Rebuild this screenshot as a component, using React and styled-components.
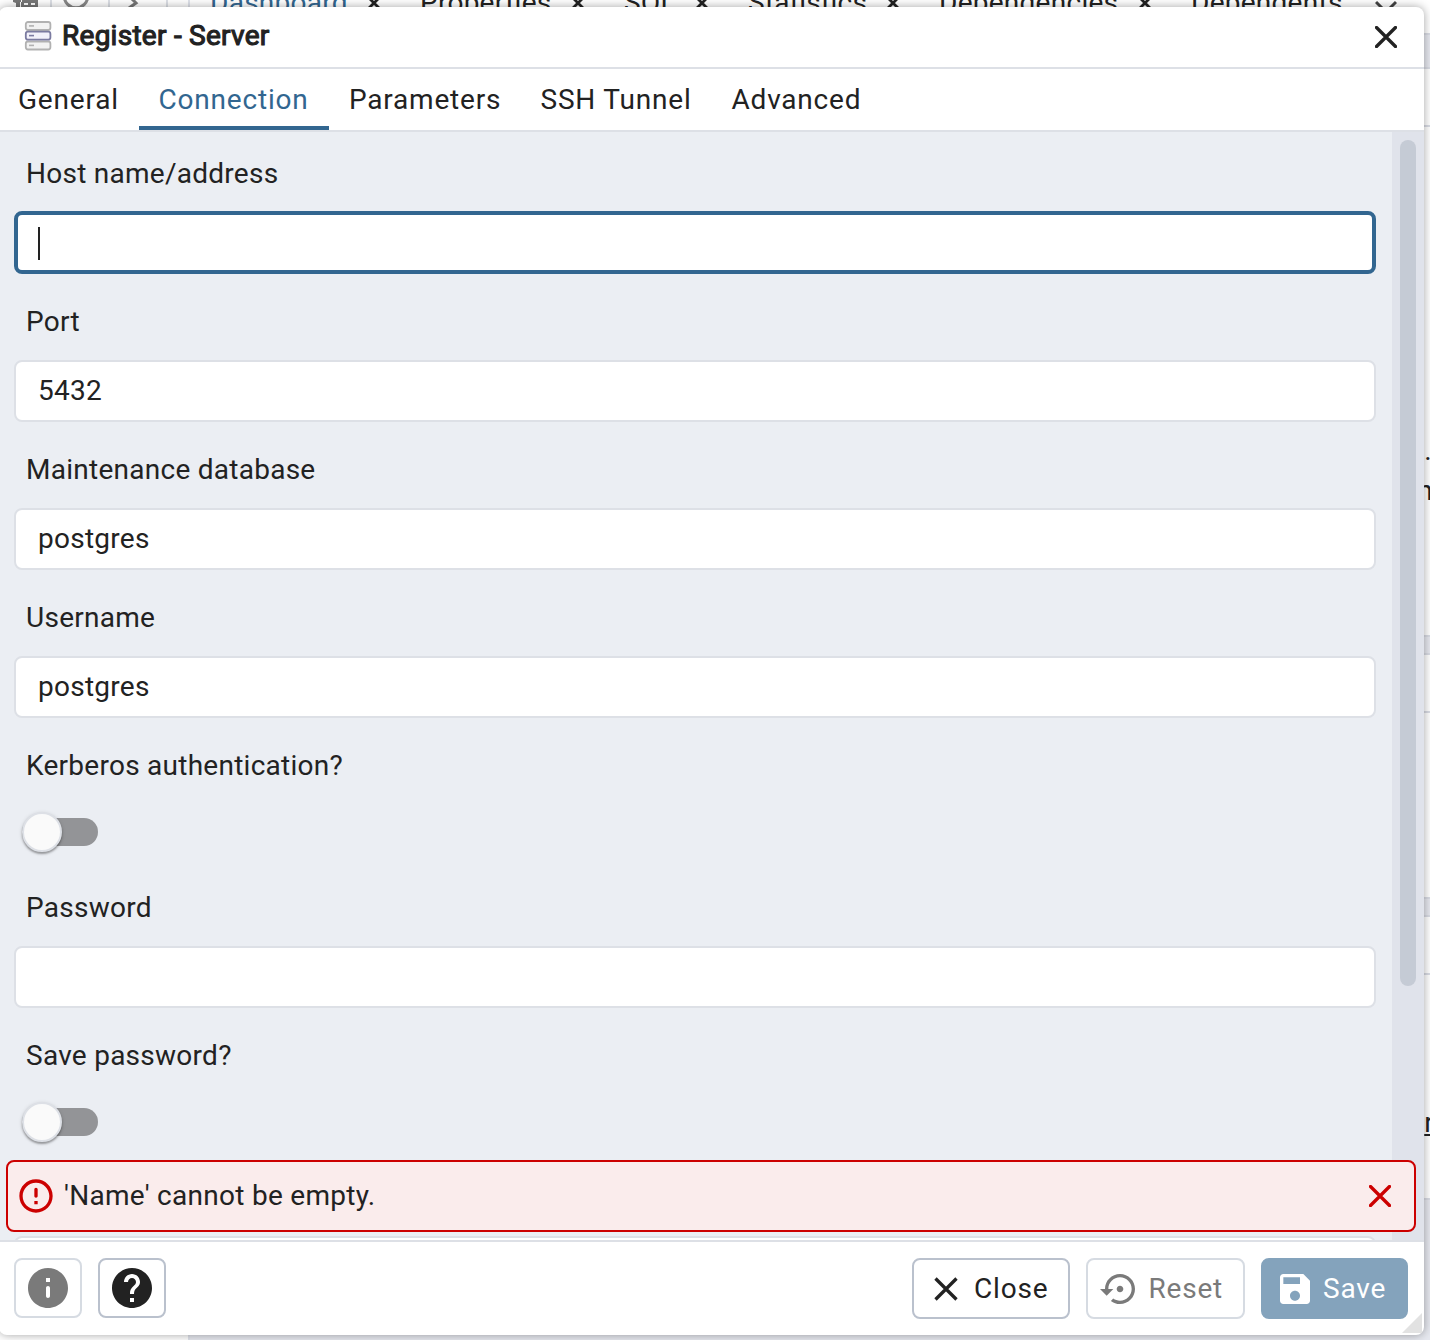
import React from "react";
import styled, { createGlobalStyle, css } from "styled-components";

const Global = createGlobalStyle`
  * { box-sizing: border-box; }
  body { margin: 0; overflow: hidden; background: #fff; }
  body, button, input { font-family: Roboto, "Liberation Sans", sans-serif; color: #222; font-size: 28px; }
`;

const Screen = styled.div`
  position: relative;
  width: 1430px;
  height: 1340px;
  overflow: hidden;
  display: flex;
  flex-direction: column;
  background: #fff;
`;

const Backdrop = styled.div`
  flex: 1;
  display: grid;
  grid-template-columns: 190px 1fr;
`;

const BrowserPanel = styled.div`
  background: #fff;
  border-right: 2px solid #e0e3eb;
`;

const MiniTools = styled.div`
  display: flex;
  height: 34px;
  align-items: flex-start;
`;

const MiniTool = styled.div`
  width: ${(p) => p.$w}px;
  height: 34px;
  border-right: 2px solid #dde0e6;
  display: flex;
  padding-left: ${(p) => p.$pad || 0}px;
  svg { display: block; flex: none; }
`;

const MainPanel = styled.div`
  display: flex;
  flex-direction: column;
  background: #e6e8ef;
`;

const BackTabs = styled.div`
  position: relative;
  height: 35px;
  background: #fff;
  border-bottom: 2px solid #d9dce4;
`;

const BackTab = styled.span`
  position: absolute;
  left: ${(p) => p.$x - 190}px;
  top: -14px;
  line-height: 34px;
  letter-spacing: 0.2626px;
  white-space: nowrap;
  color: ${(p) => (p.$active ? "#326690" : "#222")};
`;

const BackTabX = styled.svg`
  position: absolute;
  left: ${(p) => p.$x - 190}px;
  top: -3px;
`;

const StripCard = styled.div`
  height: ${(p) => p.$h}px;
  margin-top: ${(p) => p.$gap}px;
  background: #fff;
  border-top: 2px solid #d9dce4;
  border-bottom: 2px solid #d9dce4;
  position: relative;
`;

const StripRule = styled.div`
  height: ${(p) => p.$at}px;
  border-bottom: 2px solid #d9dce4;
`;

const Stray = styled.span`
  position: absolute;
  right: ${(p) => p.$right}px;
  top: ${(p) => p.$top}px;
  line-height: 34px;
  letter-spacing: 0.2626px;
  text-decoration: ${(p) => (p.$link ? "underline" : "none")};
`;

const Dialog = styled.section`
  position: absolute;
  left: -1px;
  top: 7px;
  width: 1425px;
  height: 1328px;
  padding-left: 1px;
  display: flex;
  flex-direction: column;
  background: #fff;
  border-radius: 8px;
  box-shadow: 0 0 10px rgba(0, 0, 0, 0.36);
`;

const Header = styled.header`
  flex: none;
  height: 62px;
  padding: 0 27px 0 24px;
  display: flex;
  align-items: center;
  border-bottom: 2px solid #dde0e6;
  > svg:first-child { margin-bottom: 2px; }
`;

const Title = styled.h1`
  flex: 1;
  margin: 0 0 3px 10px;
  font-size: 28px;
  line-height: 34px;
  font-weight: 400;
  letter-spacing: 0.2626px;
  -webkit-text-stroke: 1.1px #222;
`;

const TabBar = styled.nav`
  flex: none;
  height: 63px;
  display: flex;
  border-bottom: 2px solid #dde0e6;
`;

const Tab = styled.button`
  width: ${(p) => p.$w}px;
  margin: 0;
  padding: 4px 0 0 ${(p) => p.$pad}px;
  border: 0;
  border-bottom: 4px solid ${(p) => (p.$active ? "#326690" : "transparent")};
  background: none;
  text-align: left;
  white-space: nowrap;
  line-height: 53px;
  letter-spacing: 0.8px;
  color: ${(p) => (p.$active ? "#326690" : "#222")};
`;

const Body = styled.div`
  position: relative;
  flex: none;
  height: 1108px;
  display: flex;
  overflow: hidden;
  background: #ebeef3;
`;

const Form = styled.div`
  flex: 1;
  padding: 18px 16px 0 14px;
`;

const ScrollTrack = styled.div`
  width: 32px;
  padding: 8px;
  background: #e0e3eb;
`;

const ScrollThumb = styled.div`
  height: 846px;
  border-radius: 8px;
  background: #c5cbd5;
`;

const Field = styled.div`
  height: ${(p) => (p.$toggle ? 142 : 148)}px;
  display: flex;
  flex-direction: column;
`;

const Label = styled.label`
  height: 62px;
  padding: 7px 12px 0;
  line-height: 34px;
  letter-spacing: 0.2626px;
`;

const Input = styled.div`
  height: 62px;
  flex: none;
  display: flex;
  align-items: center;
  padding: 0 22px 0;
  border: 2px solid #dde0e6;
  border-radius: 8px;
  background: #fff;
  letter-spacing: 0.2626px;
  line-height: 34px;
  ${(p) => p.$focus && css`
    height: 63px;
    margin-top: -1px;
    padding: 0 20px;
    border: 4px solid #326690;
  `}
`;

const Caret = styled.i`
  width: 2px;
  height: 33px;
  margin-top: 1px;
  background: #222;
`;

const Switch = styled.div`
  display: flex;
  align-items: center;
  width: 76px;
  height: 28px;
  margin: 14px 0 0 8px;
  border-radius: 14px;
  background: #939497;
`;

const Knob = styled.div`
  flex: none;
  width: 40px;
  height: 40px;
  border: 2px solid #dde0e6;
  border-radius: 50%;
  background: #fafafa;
  box-shadow: 0 2px 2px rgba(0, 0, 0, 0.3), 0 1px 4px rgba(0, 0, 0, 0.14);
`;

const Alert = styled.div`
  position: absolute;
  left: 6px;
  top: 1028px;
  width: 1410px;
  height: 72px;
  padding: 0 23px 0 8px;
  display: flex;
  align-items: center;
  border: 2px solid #cc0000;
  border-radius: 8px;
  background: #faecec;
`;

const AlertText = styled.span`
  flex: 1;
  margin-left: 8px;
  line-height: 34px;
  letter-spacing: 0.28px;
`;

const Footer = styled.footer`
  flex: 1;
  padding: 16px 16px 0 14px;
  display: flex;
  align-items: flex-start;
  gap: 16px;
  border-top: 2px solid #dde0e6;
`;

const Spacer = styled.div`
  flex: 1;
`;

const Button = styled.button`
  width: ${(p) => p.$w}px;
  height: ${(p) => (p.$w === 68 ? 60 : 61)}px;
  padding: 0 0 0 ${(p) => p.$pad}px;
  display: flex;
  align-items: center;
  gap: ${(p) => p.$gap || 0}px;
  border: 2px solid ${(p) => (p.$primary ? "#84a3bc" : p.$disabled ? "#d6dbe2" : "#bac1cd")};
  border-radius: 8px;
  background: ${(p) => (p.$primary ? "#84a3bc" : "#fff")};
  color: ${(p) => (p.$primary ? "#fff" : p.$disabled ? "#7a7a7a" : "#222")};
  line-height: 34px;
  letter-spacing: 0.8px;
  svg { flex: none; display: block; }
`;

const Grip = styled.svg`
  position: absolute;
  right: 2px;
  bottom: 2px;
`;

const Cross = ({ size = 22, width = 3, color = "#222", cap = "butt" }) => (
  <svg width={size} height={size} viewBox={`0 0 ${size} ${size}`} fill="none" stroke={color} strokeWidth={width} strokeLinecap={cap}>
    <path d={`M1.5 1.5L${size - 1.5} ${size - 1.5}M${size - 1.5} 1.5L1.5 ${size - 1.5}`} />
  </svg>
);

const ServerIcon = () => (
  <svg width="28" height="30" viewBox="0 0 28 30">
    {[["#b1b1b1", "#f2f2f2", 1], ["#b1b1b1", "#f2f2f2", 20.5], ["#7b7ba0", "#f2f1fa", 10.7]].map(([c, f, y]) => (
      <g key={y}>
        <rect x="1.8" y={y} width="24.6" height="8" rx="2.2" fill={f} stroke={c} strokeWidth="1.8" />
        <path d={`M5 ${y + 3.9}h5`} stroke={c} strokeWidth="1.6" />
      </g>
    ))}
  </svg>
);

const Mui = ({ size, d, color = "currentColor" }) => (
  <svg width={size} height={size} viewBox="0 0 24 24" fill={color}><path d={d} /></svg>
);

const INFO = "M12 2C6.48 2 2 6.48 2 12s4.48 10 10 10 10-4.48 10-10S17.52 2 12 2zm0 15c-.55 0-1-.45-1-1v-4c0-.55.45-1 1-1s1 .45 1 1v4c0 .55-.45 1-1 1zm1-8h-2V7h2v2z";
const HELP = "M12 2C6.48 2 2 6.48 2 12s4.48 10 10 10 10-4.48 10-10S17.52 2 12 2zm1 17h-2v-2h2v2zm2.07-7.75l-.9.92C13.45 12.9 13 13.5 13 15h-2v-.5c0-1.1.45-2.1 1.17-2.83l1.24-1.26c.37-.36.59-.86.59-1.41 0-1.1-.9-2-2-2s-2 .9-2 2H8c0-2.21 1.79-4 4-4s4 1.79 4 4c0 .88-.36 1.68-.93 2.25z";
const ERROR = "M12 7c.55 0 1 .45 1 1v4c0 .55-.45 1-1 1s-1-.45-1-1V8c0-.55.45-1 1-1zm-.01-5C6.47 2 2 6.48 2 12s4.47 10 9.99 10C17.52 22 22 17.52 22 12S17.52 2 11.99 2zM12 20c-4.42 0-8-3.58-8-8s3.58-8 8-8 8 3.58 8 8-3.58 8-8 8zm1-3h-2v-2h2v2z";
const RESTORE = "M14 12c0-1.1-.9-2-2-2s-2 .9-2 2 .9 2 2 2 2-.9 2-2zm-2-9c-4.97 0-9 4.03-9 9H0l4 4 4-4H5c0-3.87 3.13-7 7-7s7 3.13 7 7-3.13 7-7 7c-1.51 0-2.91-.49-4.06-1.3l-1.42 1.44C8.04 20.3 9.94 21 12 21c4.97 0 9-4.03 9-9s-4.03-9-9-9z";
const SAVE = "M17 3H5c-1.11 0-2 .9-2 2v14c0 1.1.89 2 2 2h14c1.1 0 2-.9 2-2V7l-4-4zm-5 16c-1.66 0-3-1.34-3-3s1.34-3 3-3 3 1.34 3 3-1.34 3-3 3zm3-10H5V5h10v4z";

const backTabs = [["Dashboard", 210, 368], ["Properties", 420, 572], ["SQL", 624, 696], ["Statistics", 748, 887], ["Dependencies", 939, 1139], ["Dependents", 1191, 0]];

const dialogTabs = [["General", 139, 18], ["Connection", 190, 19.5], ["Parameters", 191, 20], ["SSH Tunnel", 192, 20.5], ["Advanced", 172, 19.5]];

const fields = [
  { label: "Host name/address", focus: true },
  { label: "Port", value: "5432" },
  { label: "Maintenance database", value: "postgres" },
  { label: "Username", value: "postgres" },
  { label: "Kerberos authentication?", toggle: true },
  { label: "Password", value: "" },
  { label: "Save password?", toggle: true },
  { label: "", value: "" },
];

export default function App() {
  return (
    <Screen>
      <Global />
      <Backdrop>
        <BrowserPanel>
          <MiniTools>
            <MiniTool $w={52} $pad={12}>
              <svg width="28" height="14"><path d="M1 0h9v2H8v8H4V3L1 2zM9 0h17v10H9zM12 3h4v2h-4zM19 3h4v2h-4zM12 7h4v3h-4zM19 7h4v3h-4z" fill="#777" fillRule="evenodd" /></svg>
            </MiniTool>
            <MiniTool $w={58} $pad={10}>
              <svg width="36" height="12"><circle cx="14" cy="-4" r="11.8" fill="none" stroke="#888" strokeWidth="3" /></svg>
            </MiniTool>
            <MiniTool $w={58} $pad={18}>
              <svg width="14" height="12"><path d="M1-4l7 7-7 5" fill="none" stroke="#777" strokeWidth="3" /></svg>
            </MiniTool>
          </MiniTools>
        </BrowserPanel>
        <MainPanel>
          <BackTabs>
            {backTabs.map(([name, x, cx], i) => (
              <React.Fragment key={name}>
                <BackTab $x={x} $active={i === 0}>{name}</BackTab>
                {cx > 0 && <BackTabX $x={cx} width="12" height="12" stroke="#222" strokeWidth="2.8"><path d="M1 1l10 10M11 1L1 11" /></BackTabX>}
              </React.Fragment>
            ))}
            <BackTabX $x={1375} width="22" height="20" stroke="#444" strokeWidth="3" fill="none"><path d="M1 5l10 10L21 5" /></BackTabX>
          </BackTabs>
          <StripCard $h={570} $gap={32}>
            <StripRule $at={58} />
            <Stray $right={-2} $top={365}>e.</Stray>
            <Stray $right={-3} $top={405}>n</Stray>
          </StripCard>
          <StripCard $h={246} $gap={16}><StripRule $at={58} /></StripCard>
          <StripCard $h={285} $gap={16}>
            <StripRule $at={58} />
            <Stray $right={-4} $top={189} $link>r</Stray>
          </StripCard>
        </MainPanel>
      </Backdrop>

      <Dialog>
        <Header>
          <ServerIcon />
          <Title>Register - Server</Title>
          <Cross cap="round" width={3.3} />
        </Header>
        <TabBar>
          {dialogTabs.map(([name, w, pad], i) => (
            <Tab key={name} $w={w} $pad={pad} $active={i === 1}>{name}</Tab>
          ))}
        </TabBar>
        <Body>
          <Form>
            {fields.map((f, i) => (
              <Field key={i} $toggle={f.toggle}>
                <Label>{f.label}</Label>
                {f.toggle ? <Switch><Knob /></Switch> : <Input $focus={f.focus}>{f.focus ? <Caret /> : f.value}</Input>}
              </Field>
            ))}
          </Form>
          <ScrollTrack><ScrollThumb /></ScrollTrack>
          <Alert>
            <Mui size={40} d={ERROR} color="#cc0000" />
            <AlertText>'Name' cannot be empty.</AlertText>
            <Cross color="#cc0000" cap="round" width={3.3} />
          </Alert>
        </Body>
        <Footer>
          <Button $w={68} $pad={8} $disabled aria-label="Info"><Mui size={48} d={INFO} /></Button>
          <Button $w={68} $pad={8} aria-label="Help"><Mui size={48} d={HELP} /></Button>
          <Spacer />
          <Button $w={158} $pad={20} $gap={16}><Cross size={24} width={3.3} />Close</Button>
          <Button $w={159} $pad={12} $gap={8.5} $disabled><Mui size={40} d={RESTORE} />Reset</Button>
          <Button $w={147} $pad={12} $gap={8} $primary><Mui size={40} d={SAVE} />Save</Button>
        </Footer>
        <Grip width="20" height="20"><path d="M20 0V20H0z" fill="#e2e2e2" /></Grip>
      </Dialog>
    </Screen>
  );
}
